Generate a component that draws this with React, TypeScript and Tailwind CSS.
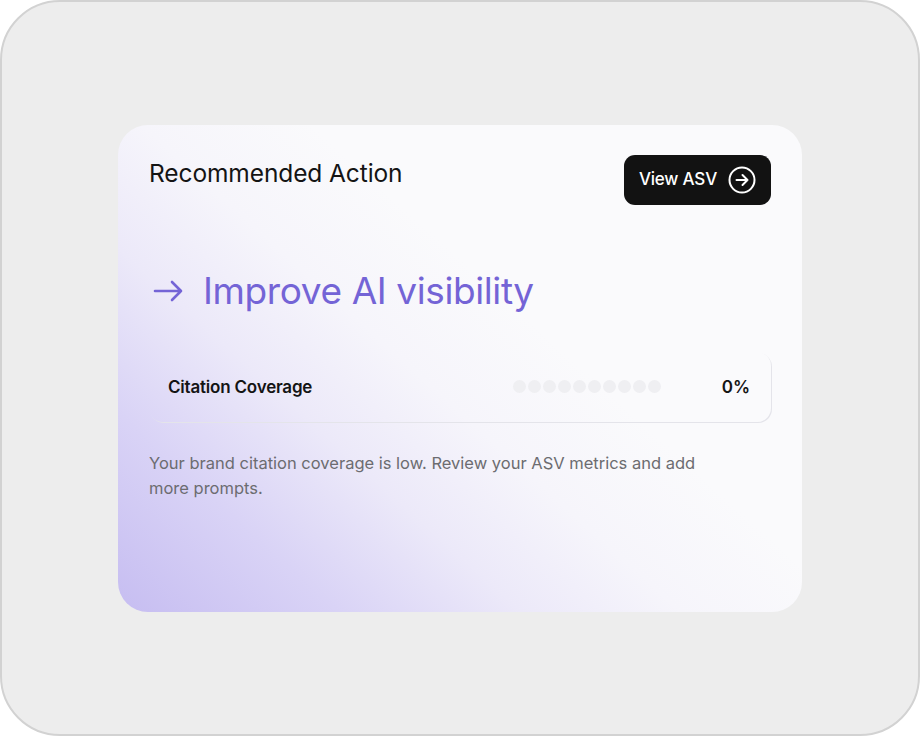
import React from 'react';

const dots = Array.from({ length: 10 });

export default function App() {
  return (
    <div className="w-[920px] h-[736px] rounded-[60px] border-2 border-[#d2d2d2] bg-[#ededed] flex items-center justify-center font-['Inter',sans-serif]">
      <div className="w-[684px] h-[487px] rounded-[30px] pt-[30px] pl-[31px] pr-[31px] bg-[linear-gradient(42deg,#c6bdf1_0%,#d9d3f6_18%,#ece9f9_33%,#f6f5fb_46%,#fafafc_60%,#fafafc_100%)]">
        {/* Header */}
        <div className="flex items-start justify-between">
          <h2 className="mt-[3px] text-[24.5px] leading-[30px] font-normal text-[#141414] tracking-[-0.1px]">Recommended Action</h2>
          <button className="h-[50px] rounded-[11px] bg-[#121212] pl-[15px] pr-[15px] flex items-center gap-[11px] text-white text-[17px] font-medium tracking-[-0.2px]">
            View ASV
            <svg width="28" height="28" viewBox="0 0 28 28" fill="none" stroke="white" strokeWidth="2" strokeLinecap="round" strokeLinejoin="round">
              <circle cx="14" cy="14" r="12.5" />
              <path d="M8.5 14h11M14.5 9l5 5-5 5" />
            </svg>
          </button>
        </div>

        {/* Action title */}
        <div className="mt-[64px] flex items-center gap-[20px] text-[#7464d6]">
          <svg width="30" height="22" viewBox="0 0 30 22" fill="none" stroke="currentColor" strokeWidth="2.6" strokeLinecap="round" strokeLinejoin="round" className="ml-[4px]">
            <path d="M2 11h26M19 2l9 9-9 9" />
          </svg>
          <span className="text-[37px] leading-[44px] font-normal tracking-[-0.4px]">Improve AI visibility</span>
        </div>

        {/* Metric row */}
        <div className="mt-[39px] h-[70px] rounded-[14px] shadow-[1px_1px_0_#e4e4ea] flex items-center pl-[19px] pr-[21px]">
          <span className="flex-1 pt-[3px] text-[17px] font-semibold text-[#141414] tracking-[-0.2px]">Citation Coverage</span>
          <div className="flex gap-[2px]">
            {dots.map((_, i) => (
              <span key={i} className="w-[13px] h-[13px] rounded-full bg-[#efeff2]" />
            ))}
          </div>
          <span className="w-[89px] pt-[2px] text-right text-[17px] font-semibold text-[#141414]">0%</span>
        </div>

        <p className="mt-[29px] max-w-[580px] text-[16.5px] leading-[25px] text-[#6c6c70]">
          Your brand citation coverage is low. Review your ASV metrics and add more prompts.
        </p>
      </div>
    </div>
  );
}
